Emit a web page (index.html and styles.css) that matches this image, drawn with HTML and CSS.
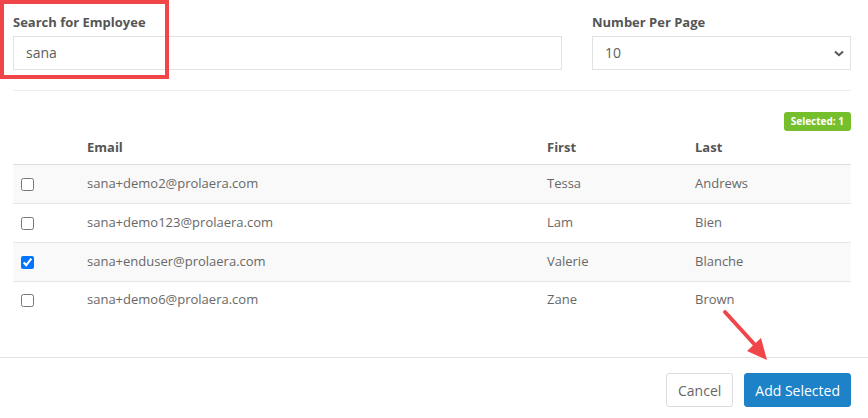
FILE: index.html
```html
<!DOCTYPE html>
<html>
<head>
<meta charset="utf-8">
<link rel="stylesheet" href="styles.css">
</head>
<body>
<div class="modal">
  <div class="content">
    <div class="filters">
      <div class="field">
        <label class="label">Search for Employee</label>
        <div class="input">sana</div>
      </div>
      <div class="field">
        <label class="label">Number Per Page</label>
        <div class="input select">
          <span>10</span>
          <svg class="chev" width="10" height="7" viewBox="0 0 10 7"><path d="M1 1.5 L5 5.2 L9 1.5" fill="none" stroke="#555" stroke-width="2"/></svg>
        </div>
      </div>
    </div>
    <div class="rule"></div>
    <div class="badge-row"><span class="badge">Selected: 1</span></div>
    <table class="grid">
      <colgroup><col class="c0"><col class="c1"><col class="c2"><col class="c3"></colgroup>
      <thead>
        <tr><th></th><th>Email</th><th>First</th><th>Last</th></tr>
      </thead>
      <tbody>
        <tr class="odd"><td class="chk"><input type="checkbox"></td><td>sana+demo2@prolaera.com</td><td>Tessa</td><td>Andrews</td></tr>
        <tr><td class="chk"><input type="checkbox"></td><td>sana+demo123@prolaera.com</td><td>Lam</td><td>Bien</td></tr>
        <tr class="odd"><td class="chk"><input type="checkbox" checked></td><td>sana+enduser@prolaera.com</td><td>Valerie</td><td>Blanche</td></tr>
        <tr class="last"><td class="chk"><input type="checkbox"></td><td>sana+demo6@prolaera.com</td><td>Zane</td><td>Brown</td></tr>
      </tbody>
    </table>
  </div>
  <div class="footer">
    <button class="btn cancel">Cancel</button>
    <button class="btn primary">Add Selected</button>
  </div>
  <div class="highlight"></div>
  <svg class="arrow" width="60" height="60" viewBox="0 0 60 60">
    <line x1="4" y1="4" x2="35" y2="38" stroke="#f0464a" stroke-width="4" stroke-linecap="round"/>
    <polygon points="46,52 26,43 40,30" fill="#f0464a"/>
  </svg>
</div>
</body>
</html>
```

FILE: styles.css
```css
html, body {
  margin: 0;
  padding: 0;
  background: #fff;
}
body {
  font-family: "Open Sans", "Liberation Sans", sans-serif;
  color: #666;
  width: 868px;
  height: 418px;
  overflow: hidden;
}
.modal {
  position: relative;
  width: 868px;
  height: 418px;
}
.content {
  padding: 13px 17px 0 13px;
}
.filters {
  display: grid;
  grid-template-columns: 549px 259px;
  column-gap: 30px;
}
.field {
  display: flex;
  flex-direction: column;
}
.label {
  font-size: 13px;
  font-weight: 700;
  line-height: 18px;
  color: #555;
  margin-bottom: 5px;
}
.input {
  box-sizing: border-box;
  height: 34px;
  border: 1px solid #e2e2e2;
  padding: 0 12px;
  font-size: 14px;
  line-height: 32px;
  color: #5e5e5e;
}
.select {
  display: flex;
  align-items: center;
  justify-content: space-between;
  padding-right: 6px;
}
.chev {
  display: block;
}
.rule {
  height: 1px;
  background: #ececec;
  margin-top: 20px;
}
.badge-row {
  display: flex;
  justify-content: flex-end;
  margin-top: 21px;
}
.badge {
  background: #76bf2c;
  color: #fff;
  font-size: 10px;
  font-weight: 700;
  line-height: 19px;
  height: 19px;
  padding: 0 7px;
  border-radius: 3px;
}
.grid {
  width: 838px;
  border-collapse: collapse;
  table-layout: fixed;
  font-size: 13px;
}
.c0 { width: 62px; }
.c1 { width: 460px; }
.c2 { width: 148px; }
.c3 { width: 168px; }
.grid th {
  text-align: left;
  font-weight: 700;
  color: #555;
  height: 31px;
  padding: 0 12px 2px;
  vertical-align: middle;
  border-bottom: 1px solid #dedede;
}
.grid td {
  height: 36px;
  padding: 0 12px 2px;
  vertical-align: middle;
  border-bottom: 1px solid #e6e6e6;
  color: #686868;
}
.grid tr.odd td {
  background: #f9f9f9;
}
.grid tr.last td {
  border-bottom: none;
  height: 34px;
}
.grid td.chk {
  padding: 0 0 0 8px;
}
.chk input {
  margin: 0;
  width: 13px;
  height: 13px;
  display: block;
}
.footer {
  position: absolute;
  left: 0;
  right: 0;
  top: 357px;
  border-top: 1px solid #e3e3e3;
  padding: 15px 17px 0 0;
  display: flex;
  justify-content: flex-end;
  gap: 11px;
}
.btn {
  font-family: "Open Sans", "Liberation Sans", sans-serif;
  height: 34px;
  font-size: 14px;
  border-radius: 3px;
  padding: 0 11px;
  cursor: pointer;
}
.cancel {
  background: #fff;
  border: 1px solid #dcdcdc;
  color: #666;
}
.primary {
  background: #1e82c8;
  border: 1px solid #1e82c8;
  color: #fff;
  font-weight: 500;
  padding: 0 10px;
}
.highlight {
  position: absolute;
  left: 0;
  top: 0;
  width: 169px;
  height: 79px;
  box-sizing: border-box;
  border: 4px solid #f0464a;
}
.arrow {
  position: absolute;
  left: 721px;
  top: 308px;
}
```
